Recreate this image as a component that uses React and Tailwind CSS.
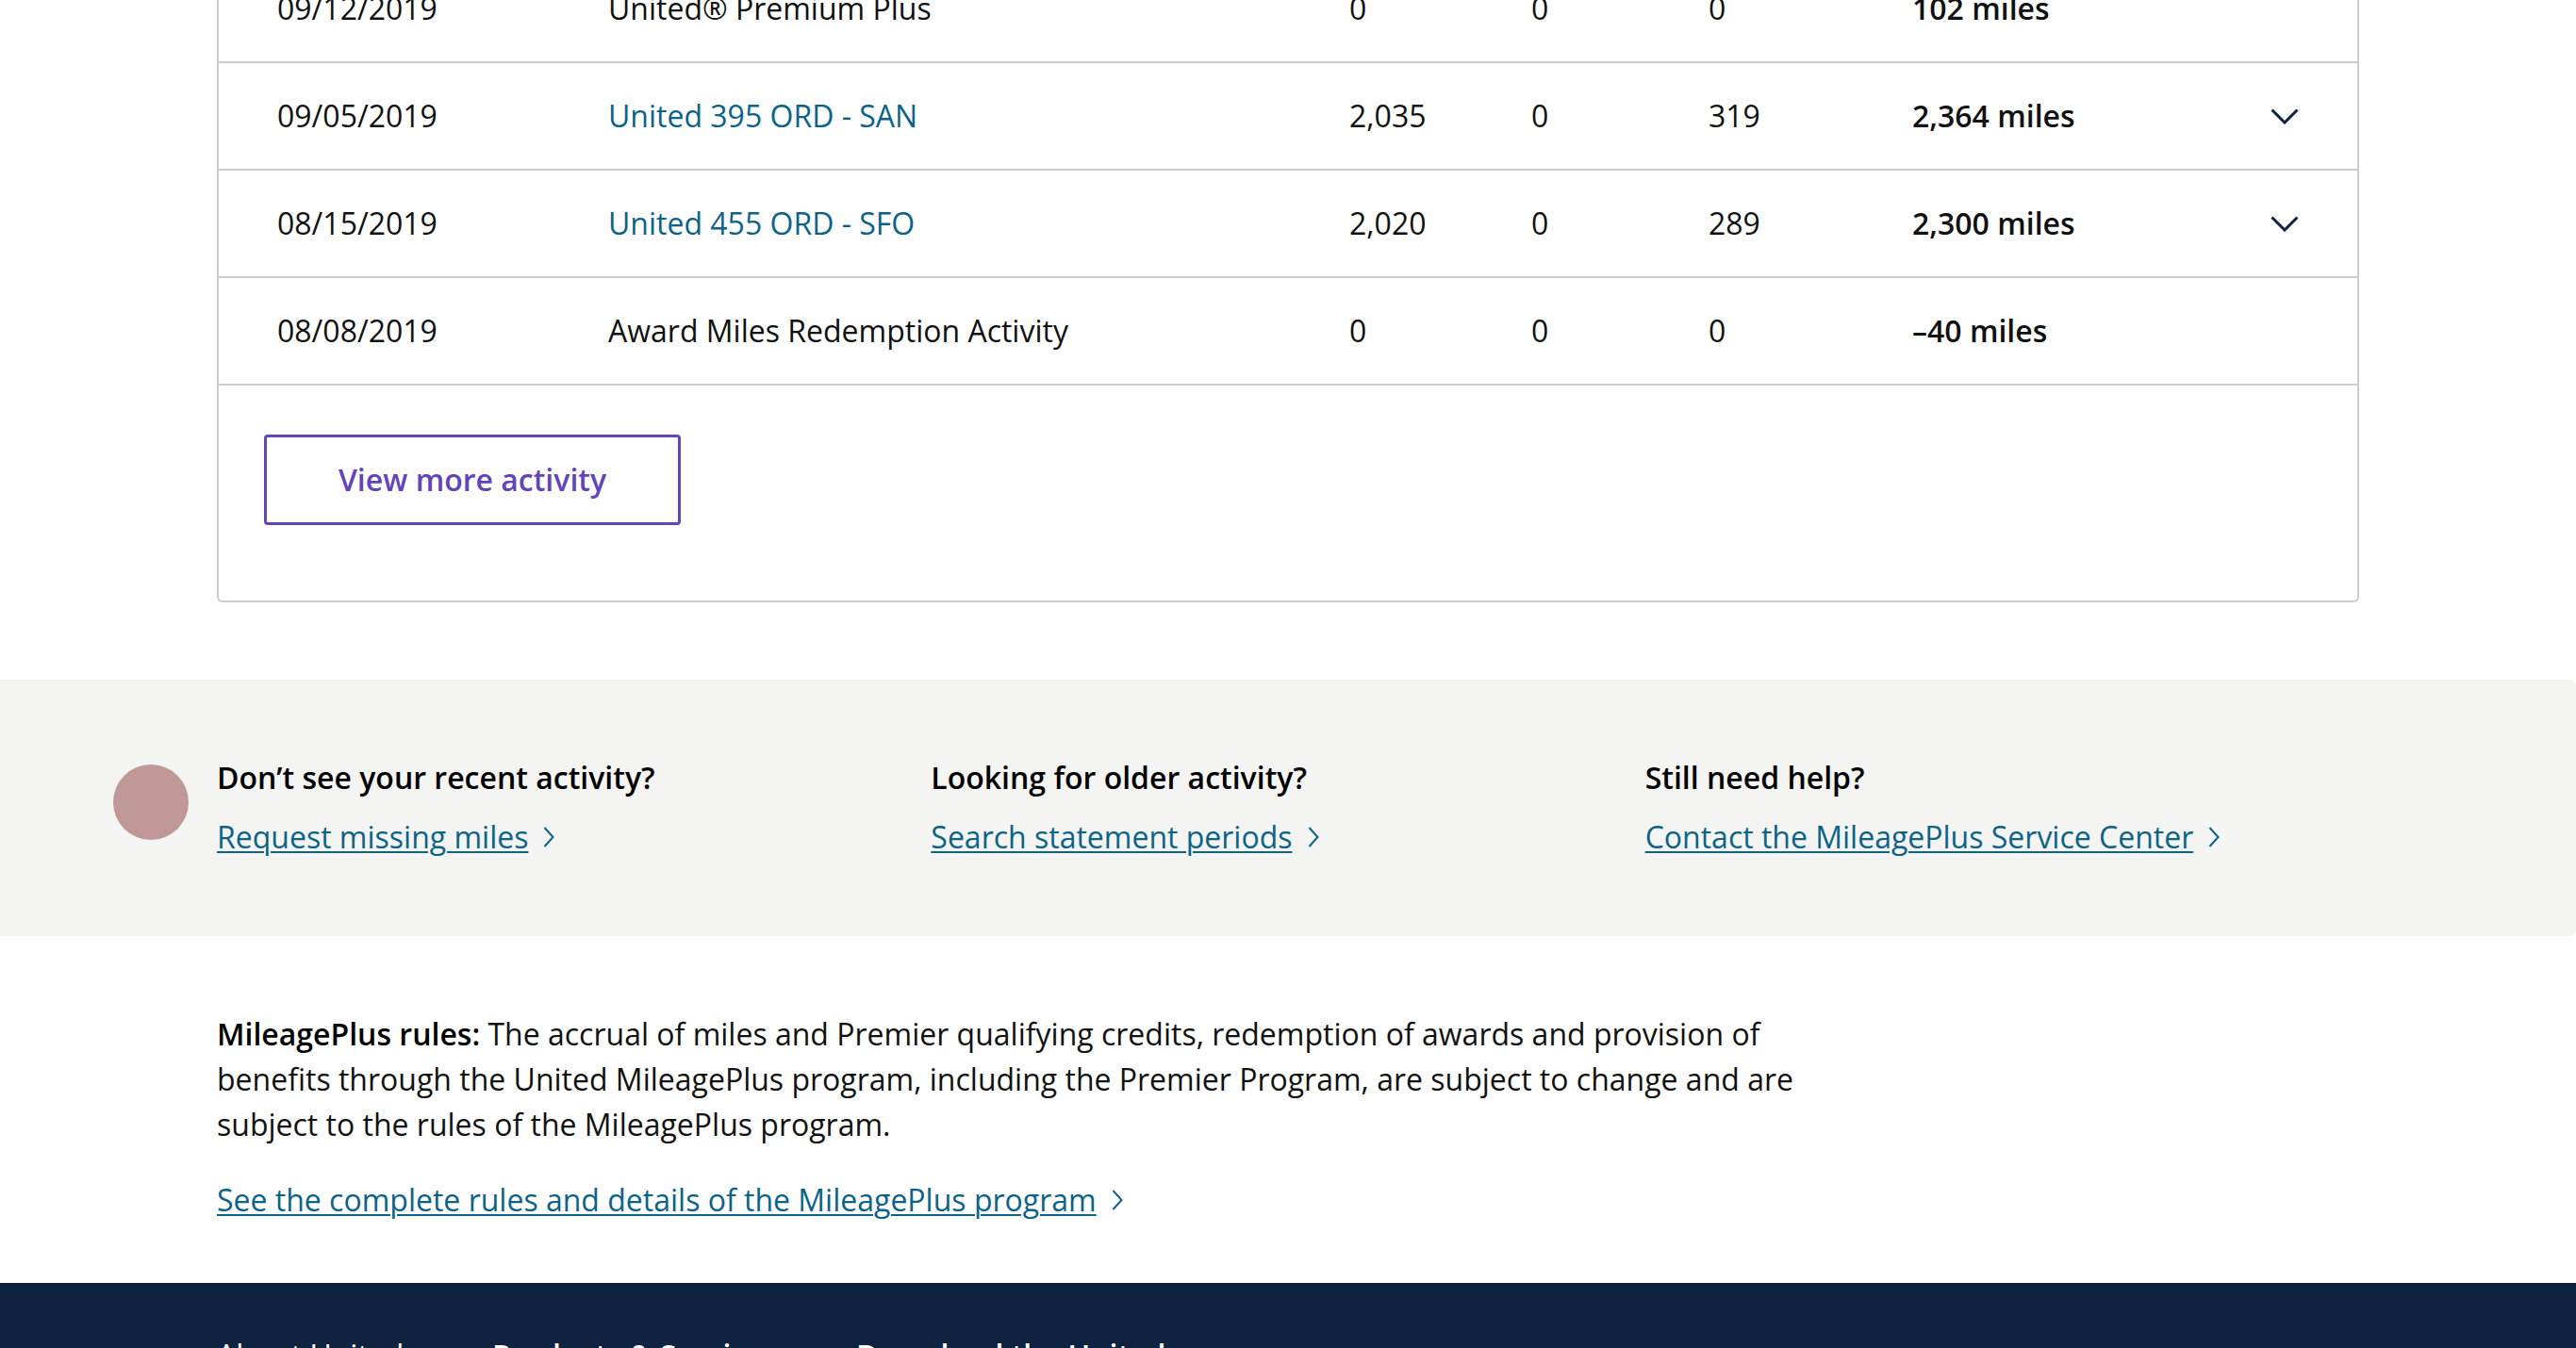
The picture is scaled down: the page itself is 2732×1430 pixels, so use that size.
import React from 'react';

const rows = [
  { date: '09/12/2019', desc: 'United® Premium Plus', link: false, base: '0', bonus: '0', premier: '0', total: '102 miles', expand: false },
  { date: '09/05/2019', desc: 'United 395 ORD - SAN', link: true, base: '2,035', bonus: '0', premier: '319', total: '2,364 miles', expand: true },
  { date: '08/15/2019', desc: 'United 455 ORD - SFO', link: true, base: '2,020', bonus: '0', premier: '289', total: '2,300 miles', expand: true },
  { date: '08/08/2019', desc: 'Award Miles Redemption Activity', link: false, base: '0', bonus: '0', premier: '0', total: '–40 miles', expand: false },
];

const helpItems = [
  { title: 'Don’t see your recent activity?', link: 'Request missing miles' },
  { title: 'Looking for older activity?', link: 'Search statement periods' },
  { title: 'Still need help?', link: 'Contact the MileagePlus Service Center' },
];

const ChevronDown = () => (
  <svg width="30" height="17" viewBox="0 0 30 17" fill="none">
    <polyline points="1.5,1.5 15,15 28.5,1.5" stroke="#0c2340" strokeWidth="3" />
  </svg>
);

const ChevronRight = () => (
  <svg width="12" height="22" viewBox="0 0 12 22" fill="none">
    <polyline points="1.5,1 10.5,11 1.5,21" stroke="#0b6388" strokeWidth="2" />
  </svg>
);

const TextLink = ({ children }) => (
  <a href="#" className="inline-flex items-center gap-[16px] text-[#0b6388]">
    <span className="underline decoration-[2px] underline-offset-[3px]">{children}</span>
    <ChevronRight />
  </a>
);

export default function App() {
  return (
    <div className="font-['Open_Sans',sans-serif] text-[32px] leading-[48px] text-[#111] bg-white overflow-hidden">
      {/* Activity table */}
      <div className="max-w-[2272px] mx-auto -mt-[47px] mb-[82px] border-x-2 border-b-2 border-[#cccccc] rounded-b-[6px]">
        {rows.map((r) => (
          <div
            key={r.date}
            className="grid grid-cols-[351px_786px_193px_188px_216px_1fr_30px] items-center h-[114px] px-[62px] border-b-2 border-[#cccccc]"
          >
            <div>{r.date}</div>
            <div>
              {r.link ? <a href="#" className="text-[#0b6388]">{r.desc}</a> : r.desc}
            </div>
            <div>{r.base}</div>
            <div>{r.bonus}</div>
            <div>{r.premier}</div>
            <div className="font-semibold">{r.total}</div>
            <div className="flex items-center">{r.expand && <ChevronDown />}</div>
          </div>
        ))}
        <div className="pl-[48px] pt-[52px] pb-[80px]">
          <button className="w-[442px] h-[96px] border-[3px] border-[#6244bb] rounded-[4px] text-[#6244bb] font-semibold">
            View more activity
          </button>
        </div>
      </div>

      {/* Help band */}
      <div className="bg-[#f4f4f3] rounded-r-[8px] pt-[80px] pb-[81px]">
        <div className="max-w-[2272px] mx-auto flex items-start">
          <div className="w-[80px] h-[80px] shrink-0 rounded-full bg-[#c09898] -ml-[110px] mr-[30px] mt-[10px]"></div>
          <div className="grid grid-cols-3 flex-1">
            {helpItems.map((h) => (
              <div key={h.title}>
                <h3 className="font-semibold text-black mb-[15px]">{h.title}</h3>
                <TextLink>{h.link}</TextLink>
              </div>
            ))}
          </div>
        </div>
      </div>

      {/* Rules */}
      <div className="max-w-[2272px] mx-auto pt-[80px] pb-[64px]">
        <p className="max-w-[1720px]">
          <span className="font-semibold text-black">MileagePlus rules:</span> The accrual of miles and Premier
          qualifying credits, redemption of awards and provision of benefits through the United MileagePlus program,
          including the Premier Program, are subject to change and are subject to the rules of the MileagePlus program.
        </p>
        <div className="mt-[32px]">
          <TextLink>See the complete rules and details of the MileagePlus program</TextLink>
        </div>
      </div>

      {/* Footer */}
      <footer className="bg-[#0e2340] text-white pt-[53px] pb-[120px]">
        <div className="max-w-[2272px] mx-auto flex">
          <div className="w-[292px]">About United</div>
          <div className="w-[386px] font-semibold">Products &amp; Services</div>
          <div className="font-semibold">Download the United app</div>
        </div>
      </footer>
    </div>
  );
}
